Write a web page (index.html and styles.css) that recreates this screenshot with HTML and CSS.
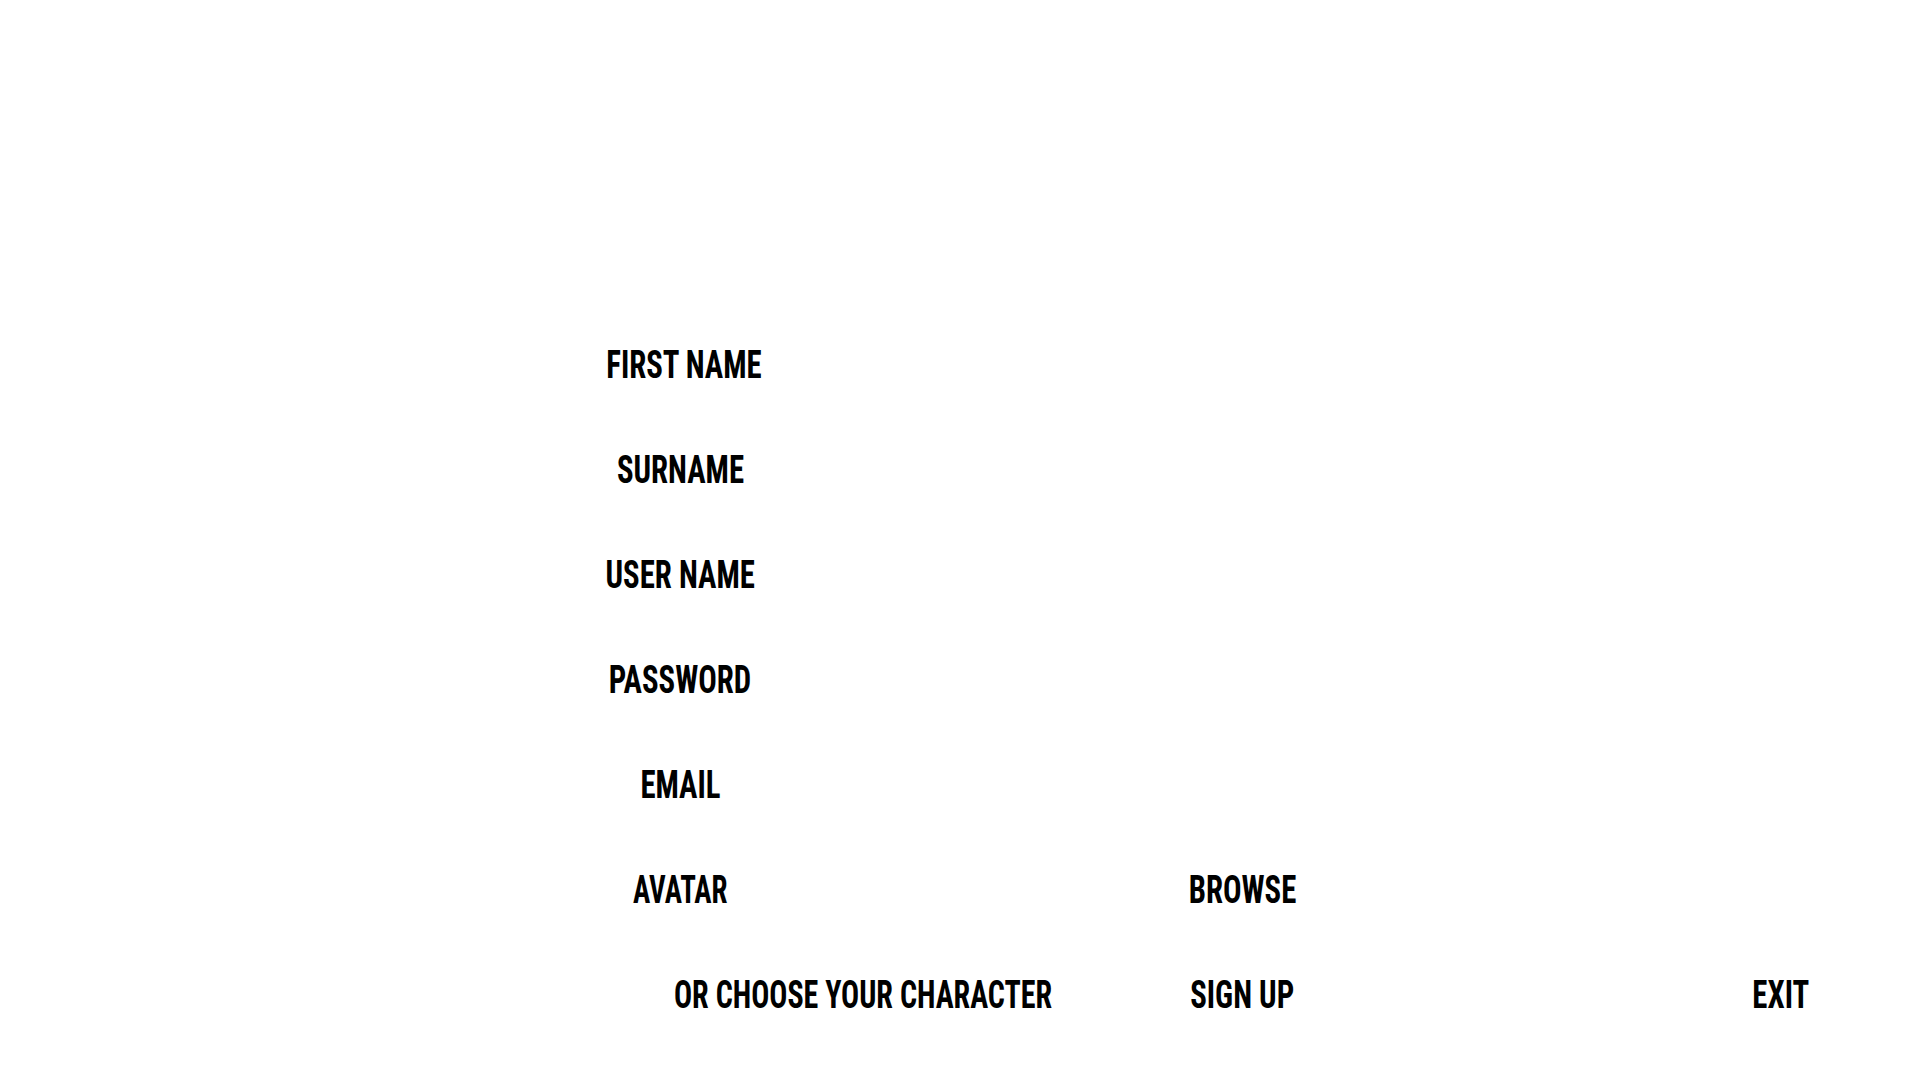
FILE: index.html
```html
<!DOCTYPE html>
<html lang="en">
<head>
<meta charset="utf-8">
<title>Sign up</title>
<link rel="stylesheet" href="styles.css">
</head>
<body>
<main class="page">
  <form class="signup">
    <label class="field-label"><span class="txt shift">First Name</span></label>
    <label class="field-label"><span class="txt">Surname</span></label>
    <label class="field-label"><span class="txt">User Name</span></label>
    <label class="field-label"><span class="txt">Password</span></label>
    <label class="field-label"><span class="txt">Email</span></label>
    <label class="field-label"><span class="txt narrow">Avatar</span></label>
    <button type="button" class="action browse"><span class="txt">Browse</span></button>
    <div class="character"><span class="txt">Or choose your character</span></div>
    <button type="button" class="action signup-btn"><span class="txt">Sign up</span></button>
    <button type="button" class="exit"><span class="txt">Exit</span></button>
  </form>
</main>
</body>
</html>
```
FILE: styles.css
```css
html, body {
  margin: 0;
  padding: 0;
  background: #ffffff;
}

.page {
  width: 1920px;
  height: 1080px;
  overflow: hidden;
}

.signup {
  display: grid;
  grid-template-columns: 560px 240px 342px 200px 1fr;
  grid-auto-rows: 105px;
  padding-top: 346px;
  font-family: "Roboto", "Open Sans", sans-serif;
  font-stretch: 75%;
  font-weight: 700;
  font-size: 38px;
  line-height: 38px;
  color: #000;
  text-transform: uppercase;
}

.txt {
  display: inline-block;
  transform: scaleX(0.81);
  transform-origin: center top;
  white-space: nowrap;
}

.txt.narrow {
  transform: scaleX(0.76);
}

.shift {
  margin-left: 8px;
}

.field-label {
  grid-column: 2;
  text-align: center;
}

.action,
.exit {
  font: inherit;
  color: inherit;
  background: none;
  border: 0;
  padding: 0;
  margin: 0;
  text-transform: inherit;
  line-height: inherit;
  cursor: pointer;
  align-self: start;
}

.action {
  grid-column: 4;
  text-align: center;
  justify-self: center;
}

.browse {
  grid-row: 6;
}

.character {
  grid-column: 2 / 4;
  grid-row: 7;
  padding-left: 114px;
}

.character .txt {
  transform: scaleX(0.79);
  transform-origin: left top;
}

.signup-btn {
  grid-row: 7;
}

.exit {
  grid-column: 5;
  grid-row: 7;
  justify-self: end;
  margin-right: 111px;
}

.exit .txt {
  transform-origin: right top;
}
```
